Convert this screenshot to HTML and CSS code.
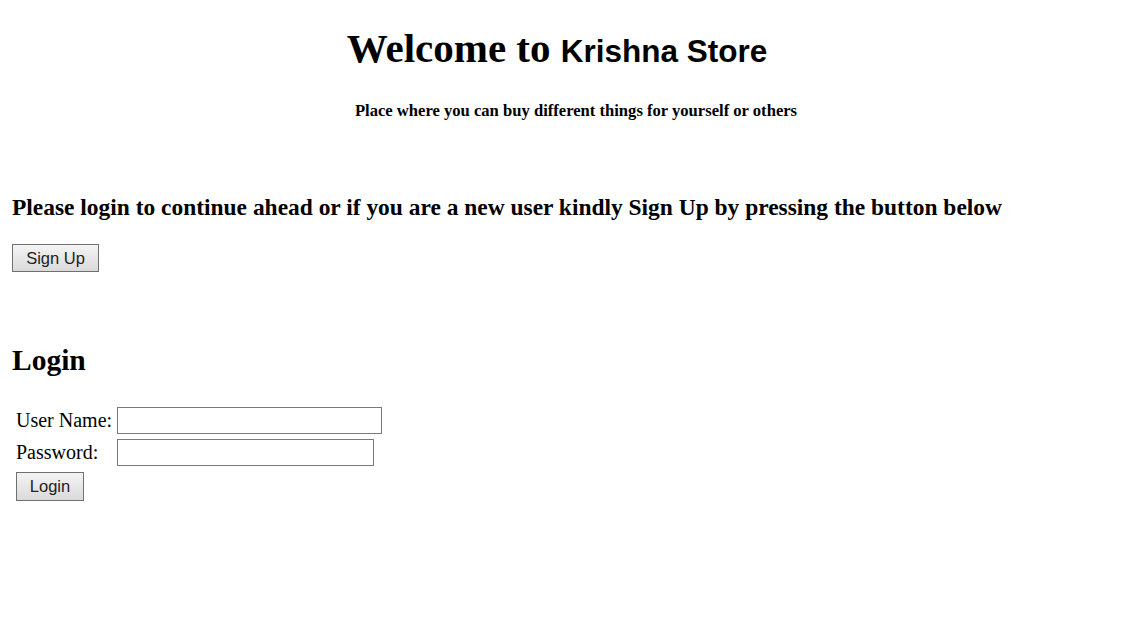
FILE: index.html
```html
<!DOCTYPE html>
<html>
<head>
<meta charset="utf-8">
<title>Krishna Store</title>
<link rel="stylesheet" href="styles.css">
</head>
<body>
<header class="hero">
  <h1 class="title">Welcome to <span class="brand">Krishna Store</span></h1>
  <h4 class="tagline">Place where you can buy different things for yourself or others</h4>
</header>
<section class="signup">
  <h3 class="prompt">Please login to continue ahead or if you are a new user kindly Sign Up by pressing the button below</h3>
  <button class="btn btn-signup" type="button">Sign Up</button>
</section>
<section class="login">
  <h2 class="login-title">Login</h2>
  <form class="login-form">
    <div class="row">
      <label class="label" for="u">User Name:</label>
      <input class="field field-user" id="u" type="text">
    </div>
    <div class="row">
      <label class="label" for="p">Password:</label>
      <input class="field field-pass" id="p" type="password">
    </div>
    <div class="actions">
      <button class="btn btn-login" type="button">Login</button>
    </div>
  </form>
</section>
</body>
</html>
```
FILE: styles.css
```css
html, body {
  margin: 0;
  padding: 0;
  background: #fff;
  color: #000;
}
body {
  font-family: "Liberation Serif", "Times New Roman", serif;
  padding: 0 12px;
}
.hero {
  text-align: center;
  padding-top: 25px;
}
.title {
  margin: 0;
  padding-right: 34px;
  font-size: 41px;
  font-weight: bold;
  line-height: 46px;
}
.brand {
  font-family: "Liberation Sans", Arial, sans-serif;
  font-size: 31.5px;
}
.tagline {
  margin: 28px 0 0;
  padding-left: 4px;
  font-size: 16.6px;
  line-height: 18px;
}
.signup {
  padding-top: 75px;
}
.prompt {
  margin: 0;
  font-size: 23.45px;
  line-height: 24px;
}
.btn {
  font-family: "Liberation Sans", Arial, sans-serif;
  font-size: 16.5px;
  color: #222;
  background: linear-gradient(#f4f4f4, #dadada);
  border: 1px solid #707070;
  border-radius: 0;
  padding: 0;
  height: 28px;
}
.btn-signup {
  margin-top: 25px;
  width: 87px;
}
.login {
  padding-top: 72px;
}
.login-title {
  margin: 0;
  font-size: 29.5px;
  line-height: 32px;
}
.login-form {
  margin-top: 31px;
  padding-left: 4px;
  display: flex;
  flex-direction: column;
  gap: 5px;
}
.row {
  display: flex;
  align-items: center;
  height: 27px;
}
.label {
  font-size: 20px;
  width: 101px;
}
.field {
  box-sizing: border-box;
  height: 27px;
  border: 1px solid #7a7a7a;
  margin: 0;
  padding: 0 3px;
}
.field-user { width: 265px; }
.field-pass { width: 257px; }
.actions {
  display: flex;
  margin-top: 1px;
}
.btn-login {
  width: 68px;
  height: 29px;
}
```
